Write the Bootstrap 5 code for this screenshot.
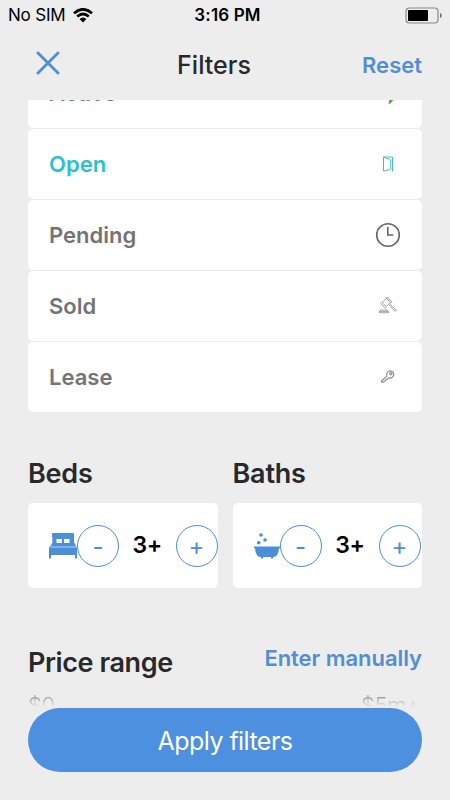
<!DOCTYPE html>
<html lang="en">
<head>
<meta charset="utf-8">
<meta name="viewport" content="width=device-width, initial-scale=1">
<title>Filters</title>
<link href="https://cdn.jsdelivr.net/npm/bootstrap@5.3.0/dist/css/bootstrap.min.css" rel="stylesheet">
<style>
:root{--blue:#4b8fdb}
body{font-family:Inter,"Liberation Sans",sans-serif;background:#ededed;color:#28292b;height:800px;line-height:1}
svg{display:block;flex:none}
.screen{width:450px;height:800px}
.status-bar{height:30px;padding:0 7px 0 8px;color:#000;font-size:17px}
.status-bar>*{flex:1 1 0}
.carrier{letter-spacing:-.2px}
.clock-text{font-size:17px;font-weight:600;letter-spacing:.15px;padding-left:4px}
.top-bar{height:70px;padding:0 28px}
.side{width:114px}
.close-icon{margin:0 0 5px 8px}
.title{width:144px;font-size:25px;font-weight:500}
.end-side{flex:1}
.blue{color:#528fd2}
.link{font-size:22px;font-weight:600;text-decoration:none;letter-spacing:0}
.scroller{height:700px;padding:0 28px}
.statuses{gap:1px;margin-top:-42px}
.status-row{height:70px;border-radius:5px;padding:0 21px;color:#747474;font-size:22px;font-weight:600}
.status-icon{width:26px}
.head{font-size:27px;font-weight:600;letter-spacing:-.2px;margin:0;line-height:32px}
.price-title{letter-spacing:-.42px;padding-top:1px}
.counters{gap:15px;margin-top:46px}
.counters>section{flex:1 1 0;min-width:0}
.counter{height:85px;margin-top:13px;border-radius:5px;padding-left:21px;color:#000}
.round{width:42px;height:42px;border:1.5px solid var(--blue);border-radius:50%;background:none;color:var(--blue);font-size:24px;padding:3px 0 0;flex:none;line-height:1}
.count{width:57px;font-size:23px;font-weight:600;text-align:center;letter-spacing:-.4px}
.price{margin-top:58px}
.manual{padding-top:1px;letter-spacing:-.05px}
.limits{font-size:22px;font-weight:300;margin-top:15px;padding:0 2px 0 0;letter-spacing:-.4px}
.limits span{background:linear-gradient(#9d9d9d 15%,#ededed 60%);-webkit-background-clip:text;background-clip:text;color:transparent}
.apply{left:28px;top:708px;width:394px;height:64px;border:0;border-radius:32px;background:#4d90df;color:#fff;font-size:25px;letter-spacing:-.55px;padding-top:3px;z-index:2}
</style>
<script src="https://cdn.jsdelivr.net/npm/bootstrap@5.3.0/dist/js/bootstrap.bundle.min.js"></script>
</head>
<body class="overflow-hidden">
<main class="screen position-relative overflow-hidden">
  <div class="status-bar d-flex align-items-center">
    <div class="d-flex align-items-center gap-2"><span class="carrier">No SIM</span>
      <svg width="20" height="15" viewBox="0 0 20 15"><g fill="none" stroke="#000" stroke-width="2.7"><path d="M1 5.3Q10-2.7 19 5.3"/><path d="M4.2 8.6Q10 3.4 15.8 8.6"/></g><path d="M6.6 11Q10 8 13.4 11L10 14.5Z"/></svg>
    </div>
    <div class="clock-text text-center text-nowrap">3:16 PM</div>
    <div class="d-flex justify-content-end"><svg width="38" height="17" viewBox="0 0 38 17"><rect x="1" y="1" width="32" height="15" rx="3.5" fill="none" stroke="#888" stroke-width="1.2"/><rect x="3" y="3" width="20" height="11" rx=".8"/><path d="M35 6v5q2-.8 2-2.5T35 6" fill="#777"/></svg></div>
  </div>
  <header class="top-bar d-flex align-items-center">
    <div class="side"><svg class="close-icon" width="24" height="24" viewBox="0 0 24 24"><path d="M2 2l20 20m0-20l-20 20" stroke="#528fd2" stroke-width="2.9" stroke-linecap="round"/></svg></div>
    <div class="title text-center">Filters</div>
    <div class="end-side text-end"><a class="link blue" href="#">Reset</a></div>
  </header>
  <div class="scroller overflow-hidden">
    <div class="statuses d-flex flex-column">
      <div class="status-row bg-white d-flex align-items-center justify-content-between" style="color:#43a83c"><span>Active</span><svg class="status-icon" height="26" viewBox="0 0 26 26"><path d="M13.5 24l1.5-6h4.5l-1.6 2.5-2.6 3z" fill="#43a83c"/></svg></div>
      <div class="status-row bg-white d-flex align-items-center justify-content-between" style="color:#29c0d5"><span>Open</span><svg class="status-icon" height="26" viewBox="0 0 26 26" fill="none" stroke="#43bdcb"><path d="M17.5 20.5V6h-9V20M8.5 6l6 2.3q1.3.4 1.3 1.7v7.2q0 1.2-1.2 1.5l-6.1 1.3"/></svg></div>
      <div class="status-row bg-white d-flex align-items-center justify-content-between"><span>Pending</span><svg class="status-icon" height="26" viewBox="0 0 26 26" fill="none" stroke="#666" stroke-width="1.6"><circle cx="13" cy="13" r="11.3"/><path d="M12.8 5v8h5.5"/></svg></div>
      <div class="status-row bg-white d-flex align-items-center justify-content-between"><span>Sold</span><svg class="status-icon" height="26" viewBox="0 0 26 26" fill="none" stroke="#999" stroke-width=".9" stroke-linejoin="round"><path d="M7 9.5l4.5-4.2 4 4-4.3 4.4zM11 4.8l1.3-.9 4.7 4.8-1.2 1.1zM6.6 9.2L5.5 10.5l4.7 4.8 1.3-1.2M13.8 11.5l6.2 6.8 1.4-1.2-6.8-6.3M5.3 18v-1h7v1M4.2 19.7v-1.3h9.5v1.3z"/></svg></div>
      <div class="status-row bg-white d-flex align-items-center justify-content-between"><span>Lease</span><svg class="status-icon" height="26" viewBox="0 0 26 26" fill="none" stroke="#888" stroke-width="1.1" stroke-linejoin="round"><path d="M11.8 12.2Q11 8.8 13.7 7.3 16.3 6 18.2 8.2 19.7 11 17.4 13.2 15.8 14.5 13.5 13.9L12.4 15.1 11 15.3 10.8 16.7 9.3 17 8.8 18.3H6.5V17z"/><circle cx="15.8" cy="9.8" r="1.2"/></svg></div>
    </div>
    <div class="counters d-flex">
      <section><h2 class="head">Beds</h2>
        <div class="counter bg-white d-flex align-items-center">
          <svg width="28" height="28" viewBox="0 0 28 28" fill="#4b8fdb"><path fill-rule="evenodd" d="M3 2q0-1 1-1h20q1 0 1 1v10H3zM7.5 7v4h5.5V7zm7.5 0v4h5.5V7z"/><path d="M2.5 11h23L28 16v10.500h-2V23H2v3.500H0V16z"/><path d="M1.200 15h25.600" stroke="#fff" stroke-opacity=".75" stroke-width=".8"/><path d="M3 5v6l-1.500 3" fill="none" stroke="#fff" stroke-width=".7"/></svg>
          <button class="round">-</button><span class="count">3+</span><button class="round">+</button>
        </div></section>
      <section><h2 class="head">Baths</h2>
        <div class="counter bg-white d-flex align-items-center">
          <svg width="26" height="28" viewBox="0 0 26 28" fill="#4b8fdb"><circle cx="7" cy="3" r="1.8"/><circle cx="11" cy="8" r="1.8"/><circle cx="4.7" cy="10.700" r="1.8"/><path d="M0 14.500h26v1.800h-1q-.5 8.700-6 8.700v1.500h-2V25H9v1.500H7V25Q1.500 25 1 16.300H0z"/></svg>
          <button class="round">-</button><span class="count">3+</span><button class="round">+</button>
        </div></section>
    </div>
    <div class="price d-flex justify-content-between"><h2 class="head price-title">Price range</h2><a class="link blue manual" href="#">Enter manually</a></div>
    <div class="limits d-flex justify-content-between"><span>$0</span><span>$5m+</span></div>
  </div>
  <button class="apply position-absolute">Apply filters</button>
</main>
</body>
</html>
